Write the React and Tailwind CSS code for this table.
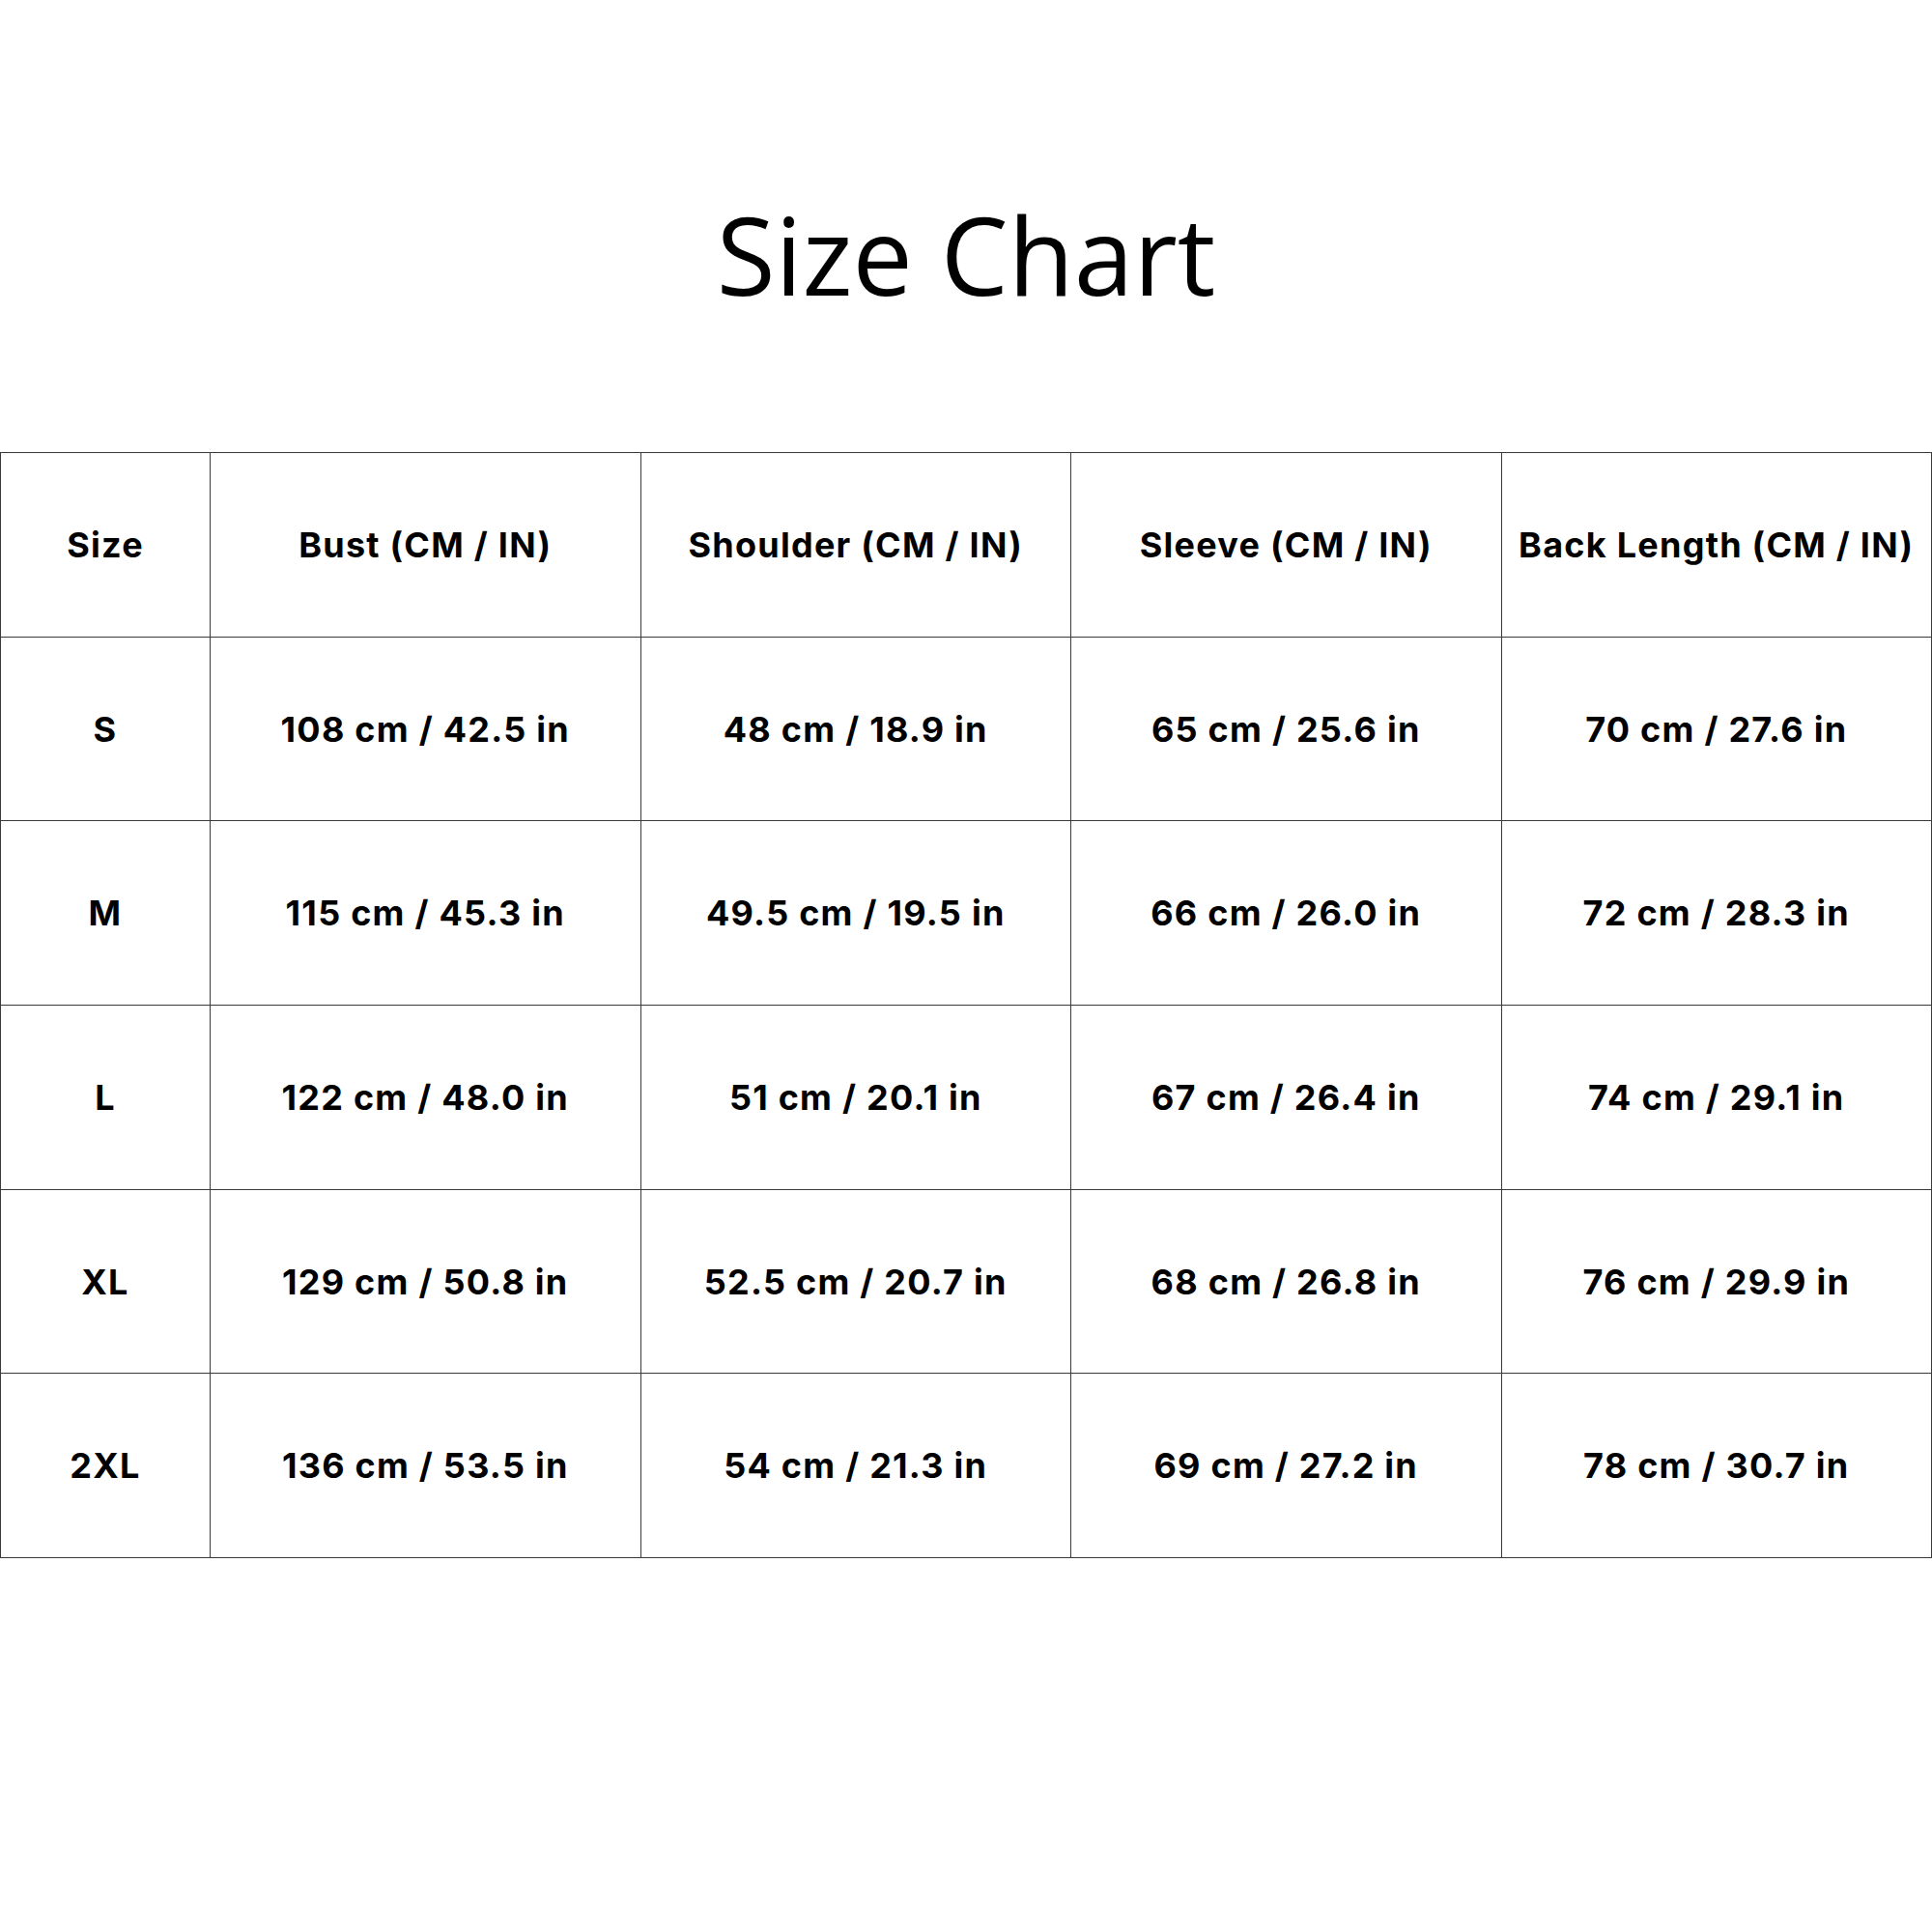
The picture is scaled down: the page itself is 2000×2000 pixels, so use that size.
import React from "react";

const headers = ["Size", "Bust (CM / IN)", "Shoulder (CM / IN)", "Sleeve (CM / IN)", "Back Length (CM / IN)"];
const rows = [
  ["S", "108 cm / 42.5 in", "48 cm / 18.9 in", "65 cm / 25.6 in", "70 cm / 27.6 in"],
  ["M", "115 cm / 45.3 in", "49.5 cm / 19.5 in", "66 cm / 26.0 in", "72 cm / 28.3 in"],
  ["L", "122 cm / 48.0 in", "51 cm / 20.1 in", "67 cm / 26.4 in", "74 cm / 29.1 in"],
  ["XL", "129 cm / 50.8 in", "52.5 cm / 20.7 in", "68 cm / 26.8 in", "76 cm / 29.9 in"],
  ["2XL", "136 cm / 53.5 in", "54 cm / 21.3 in", "69 cm / 27.2 in", "78 cm / 30.7 in"],
];

export default function App() {
  const all = [headers, ...rows];
  return (
    <div className="w-[2000px] h-[2000px] bg-white text-black" style={{ fontFamily: "Inter, Lato, sans-serif" }}>
      <div className="h-[468px] flex justify-center pt-[208px]">
        <h1 className="text-[111px] leading-[111px] font-normal" style={{ fontFamily: "'Open Sans', sans-serif" }}>Size Chart</h1>
      </div>
      <div className="grid grid-cols-[217px_repeat(4,1fr)] border-t border-l border-[#3a3a3a]">
        {all.map((r, i) =>
          r.map((c, j) => (
            <div
              key={i + "-" + j}
              className="h-[190.7px] flex items-center justify-center border-r border-b border-[#3a3a3a] text-[36px] tracking-[1.25px] font-bold whitespace-nowrap"
            >
              {c}
            </div>
          ))
        )}
      </div>
    </div>
  );
}
